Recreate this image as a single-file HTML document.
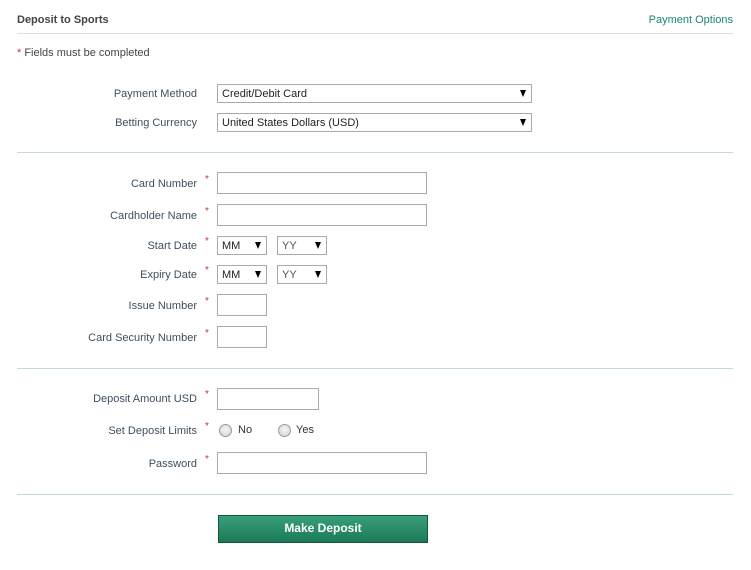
<!DOCTYPE html>
<html><head><style>
body{margin:0;width:751px;height:570px;background:#fff;font-family:"Liberation Sans",Arial,sans-serif;font-size:11px;color:#333;position:relative;overflow:hidden}
.a{position:absolute}
.lbl{position:absolute;right:554px;color:#3d4f60;white-space:nowrap;line-height:12px}
.st{position:absolute;left:205px;color:#c0305a;font-size:10px;line-height:10px}
.hr{position:absolute;left:17px;width:716px;height:1px;background:#c5dbd6}
.in{position:absolute;left:217px;border:1px solid #a9a9a9;box-sizing:border-box;background:#fff}
.sel{position:absolute;border:1px solid #a9a9a9;box-sizing:border-box;background:#fff;font-size:11px;line-height:19px;padding-left:4px;color:#222}
.sel::after{content:"";position:absolute;right:5px;top:5px;border-left:3.5px solid transparent;border-right:3.5px solid transparent;border-top:7px solid #000}
.rad{position:absolute;width:11px;height:11px;border-radius:50%;border:1px solid #999;background:radial-gradient(circle at 50% 40%,#f4f4f4,#d4d4d4)}
</style></head><body>
<div class="a" style="left:17px;top:14px;font-weight:bold;color:#444">Deposit to Sports</div>
<div class="a" style="right:18px;top:14px;color:#1a8575">Payment Options</div>
<div class="hr" style="top:33px;background:#ddd"></div>
<div class="a" style="left:17px;top:47px;color:#444"><span style="color:#c0305a">*</span> Fields must be completed</div>

<div class="lbl" style="top:88px">Payment Method</div>
<div class="sel" style="left:217px;top:84px;width:315px;height:19px">Credit/Debit Card</div>
<div class="lbl" style="top:117px">Betting Currency</div>
<div class="sel" style="left:217px;top:113px;width:315px;height:19px">United States Dollars (USD)</div>
<div class="hr" style="top:152px"></div>

<div class="lbl" style="top:178px">Card Number</div><div class="st" style="top:175px">*</div>
<div class="in" style="top:172px;width:210px;height:22px"></div>
<div class="lbl" style="top:210px">Cardholder Name</div><div class="st" style="top:207px">*</div>
<div class="in" style="top:204px;width:210px;height:22px"></div>
<div class="lbl" style="top:240px">Start Date</div><div class="st" style="top:237px">*</div>
<div class="sel" style="left:217px;top:236px;width:50px;height:19px">MM</div>
<div class="sel" style="left:277px;top:236px;width:50px;height:19px;color:#555">YY</div>
<div class="lbl" style="top:269px">Expiry Date</div><div class="st" style="top:266px">*</div>
<div class="sel" style="left:217px;top:265px;width:50px;height:19px">MM</div>
<div class="sel" style="left:277px;top:265px;width:50px;height:19px;color:#555">YY</div>
<div class="lbl" style="top:300px">Issue Number</div><div class="st" style="top:297px">*</div>
<div class="in" style="top:294px;width:50px;height:22px"></div>
<div class="lbl" style="top:332px">Card Security Number</div><div class="st" style="top:329px">*</div>
<div class="in" style="top:326px;width:50px;height:22px"></div>
<div class="hr" style="top:368px"></div>

<div class="lbl" style="top:393px">Deposit Amount USD</div><div class="st" style="top:390px">*</div>
<div class="in" style="top:388px;width:102px;height:22px"></div>
<div class="lbl" style="top:425px">Set Deposit Limits</div><div class="st" style="top:422px">*</div>
<div class="rad" style="left:219px;top:424px"></div><div class="a" style="left:238px;top:424px;color:#333">No</div>
<div class="rad" style="left:278px;top:424px"></div><div class="a" style="left:296px;top:424px;color:#333">Yes</div>
<div class="lbl" style="top:458px">Password</div><div class="st" style="top:455px">*</div>
<div class="in" style="top:452px;width:210px;height:22px"></div>
<div class="hr" style="top:494px"></div>

<div class="a" style="left:218px;top:515px;width:210px;height:28px;box-sizing:border-box;border:1px solid #14553c;background:linear-gradient(#38a079,#1b7a55);color:#fff;font-weight:bold;font-size:12px;text-align:center;line-height:25px">Make Deposit</div>
</body></html>
